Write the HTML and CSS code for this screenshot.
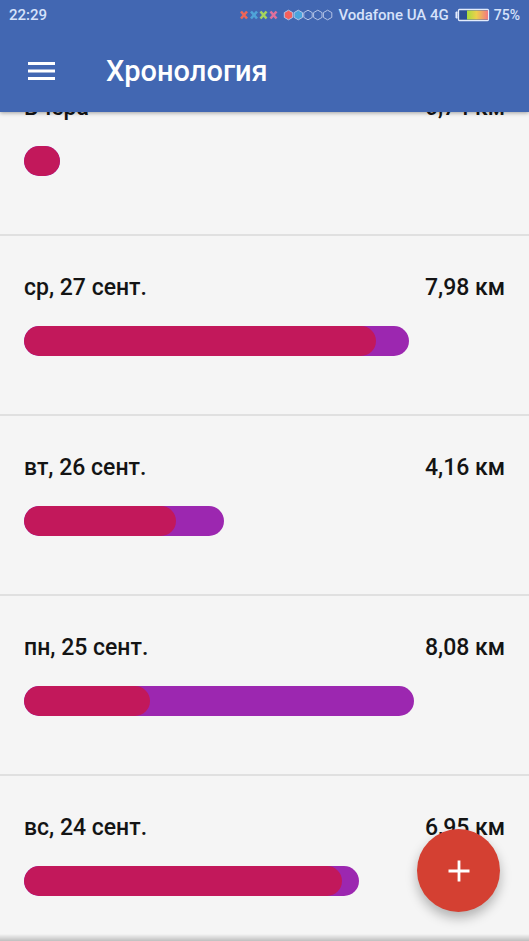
FILE: index.html
```
<!DOCTYPE html>
<html lang="ru">
<head>
<meta charset="utf-8">
<meta name="viewport" content="width=device-width, initial-scale=1">
<title>Хронология</title>
<link rel="stylesheet" href="styles.css">
</head>
<body>
<header class="header">
  <div class="status">
    <span class="clock">22:29</span>
    <svg class="signals" width="94" height="12" viewBox="0 0 94 12" aria-hidden="true">
      <g fill="none" stroke-width="2.600">
        <path stroke="#ee6657" d="M2 2.500l6 7M8 2.500l-6 7"/>
        <path stroke="#4fa3d8" d="M12 2.500l6 7M18 2.500l-6 7"/>
        <path stroke="#a5d45c" d="M21.500 2.500l6 7M27.500 2.500l-6 7"/>
        <path stroke="#e0709c" d="M31.500 2.500l6 7M37.500 2.500l-6 7"/>
      </g>
      <g fill="none" stroke="#b4c4e6" stroke-width="1">
        <path fill="#f4605c" d="M49.500 1.200l4.200 2.400v4.800l-4.200 2.400l-4.200-2.400v-4.800z"/>
        <path fill="#4aa5dc" d="M59.300 1.200l4.200 2.400v4.800l-4.200 2.400l-4.200-2.400v-4.800z"/>
        <path d="M69 1.200l4.200 2.400v4.800l-4.200 2.400l-4.200-2.400v-4.800z"/>
        <path d="M78.800 1.200l4.200 2.400v4.800l-4.200 2.400l-4.200-2.400v-4.800z"/>
        <path d="M88.600 1.200l4.200 2.400v4.800l-4.200 2.400l-4.200-2.400v-4.800z"/>
      </g>
    </svg>
    <span class="carrier">Vodafone UA 4G</span>
    <svg class="battery" width="35" height="14" viewBox="0 0 35 14" aria-hidden="true">
      <defs>
        <linearGradient id="charge">
          <stop offset="0" stop-color="#a8dc3c"/>
          <stop offset=".45" stop-color="#ecd04c"/>
          <stop offset="1" stop-color="#f47880"/>
        </linearGradient>
      </defs>
      <path d="M2.500 4h-1.500v6h1.500" fill="#e4ecfc" stroke="#e4ecfc"/>
      <rect x="3.500" y="1.500" width="30" height="11" rx="1" fill="#2e4f92" stroke="#e4ecfc" stroke-width="1.300"/>
      <rect x="12" y="2.500" width="21" height="9" fill="url(#charge)"/>
    </svg>
    <span class="percent">75%</span>
  </div>
  <div class="toolbar">
    <button class="menu" type="button" aria-label="Меню">
      <svg width="28" height="20" viewBox="0 0 28 20" aria-hidden="true">
        <path d="M0 2.500h27M0 10h27M0 17.500h27" stroke="#fff" stroke-width="3"/>
      </svg>
    </button>
    <h1 class="title">Хронология</h1>
  </div>
</header>
<main class="timeline">
  <ul class="days">
    <li class="day">
      <div class="summary"><span>Вчера</span><span>0,74 км</span></div>
      <div class="bar" style="width:7.500%"><div class="part" style="width:100%"></div></div>
    </li>
    <li class="day">
      <div class="summary"><span>ср, 27 сент.</span><span>7,98 км</span></div>
      <div class="bar" style="width:80%"><div class="part" style="width:91.500%"></div></div>
    </li>
    <li class="day">
      <div class="summary"><span>вт, 26 сент.</span><span>4,16 км</span></div>
      <div class="bar" style="width:41.600%"><div class="part" style="width:76%"></div></div>
    </li>
    <li class="day">
      <div class="summary"><span>пн, 25 сент.</span><span>8,08 км</span></div>
      <div class="bar" style="width:81%"><div class="part" style="width:32.300%"></div></div>
    </li>
    <li class="day">
      <div class="summary"><span>вс, 24 сент.</span><span>6,95 км</span></div>
      <div class="bar" style="width:69.700%"><div class="part" style="width:95%"></div></div>
    </li>
  </ul>
</main>
<button class="add" type="button" aria-label="Добавить">
  <svg width="22" height="22" viewBox="0 0 22 22" aria-hidden="true">
    <path d="M11 0.500v21M0.500 11h21" stroke="#fff" stroke-width="2.800"/>
  </svg>
</button>
<div class="edge"></div>
</body>
</html>
```
FILE: styles.css
```
* {
  box-sizing: border-box;
}

body {
  display: flex;
  flex-direction: column;
  height: 100vh;
  margin: 0;
  overflow: hidden;
  background: #f5f5f5;
  color: #141414;
  font-family: Roboto, "Noto Sans", sans-serif;
  font-weight: 500;
}

button {
  display: flex;
  align-items: center;
  justify-content: center;
  padding: 0;
  border: 0;
  background: none;
}

.header {
  z-index: 1;
  flex: none;
  background: #4267b2;
  box-shadow: 0 1px 4px rgba(0, 0, 0, 0.35);
}

.status {
  display: flex;
  align-items: center;
  height: 30px;
  padding: 0 9px;
  color: #d6e2fa;
  font-size: 15px;
  line-height: 20px;
}

.clock {
  margin-right: auto;
}

.carrier {
  margin: 0 6px 0 5px;
}

.percent {
  margin-left: 4px;
  font-size: 14px;
}

.toolbar {
  display: flex;
  align-items: center;
  gap: 50px;
  height: 82px;
  padding: 0 28px;
}

.title {
  margin: 0;
  color: #fff;
  font-size: 29px;
  font-weight: 500;
  line-height: 36px;
}

.timeline {
  flex: 1;
  min-height: 0;
  overflow: hidden;
}

/* The list is scrolled part of the way through its first day. */
.days {
  margin: -56px 0 0;
  padding: 0;
  list-style: none;
}

.day {
  padding: 36px 24px 58px;
  border-bottom: 2px solid #e0e0e0;
}

.summary {
  display: flex;
  justify-content: space-between;
  margin-bottom: 22px;
  font-size: 23px;
  line-height: 32px;
}

.bar {
  height: 30px;
  overflow: hidden;
  border-radius: 15px;
  background: #9c27b0;
}

.part {
  height: 100%;
  border-radius: 15px;
  background: #c2185b;
}

.add {
  position: fixed;
  right: 29px;
  bottom: 29px;
  width: 83px;
  height: 83px;
  border-radius: 50%;
  background: #d44032;
  box-shadow: 0 6px 12px rgba(0, 0, 0, 0.28);
}

.edge {
  position: fixed;
  right: 0;
  bottom: 0;
  left: 0;
  height: 7px;
  background: linear-gradient(rgba(0, 0, 0, 0), rgba(0, 0, 0, 0.22));
}
```
